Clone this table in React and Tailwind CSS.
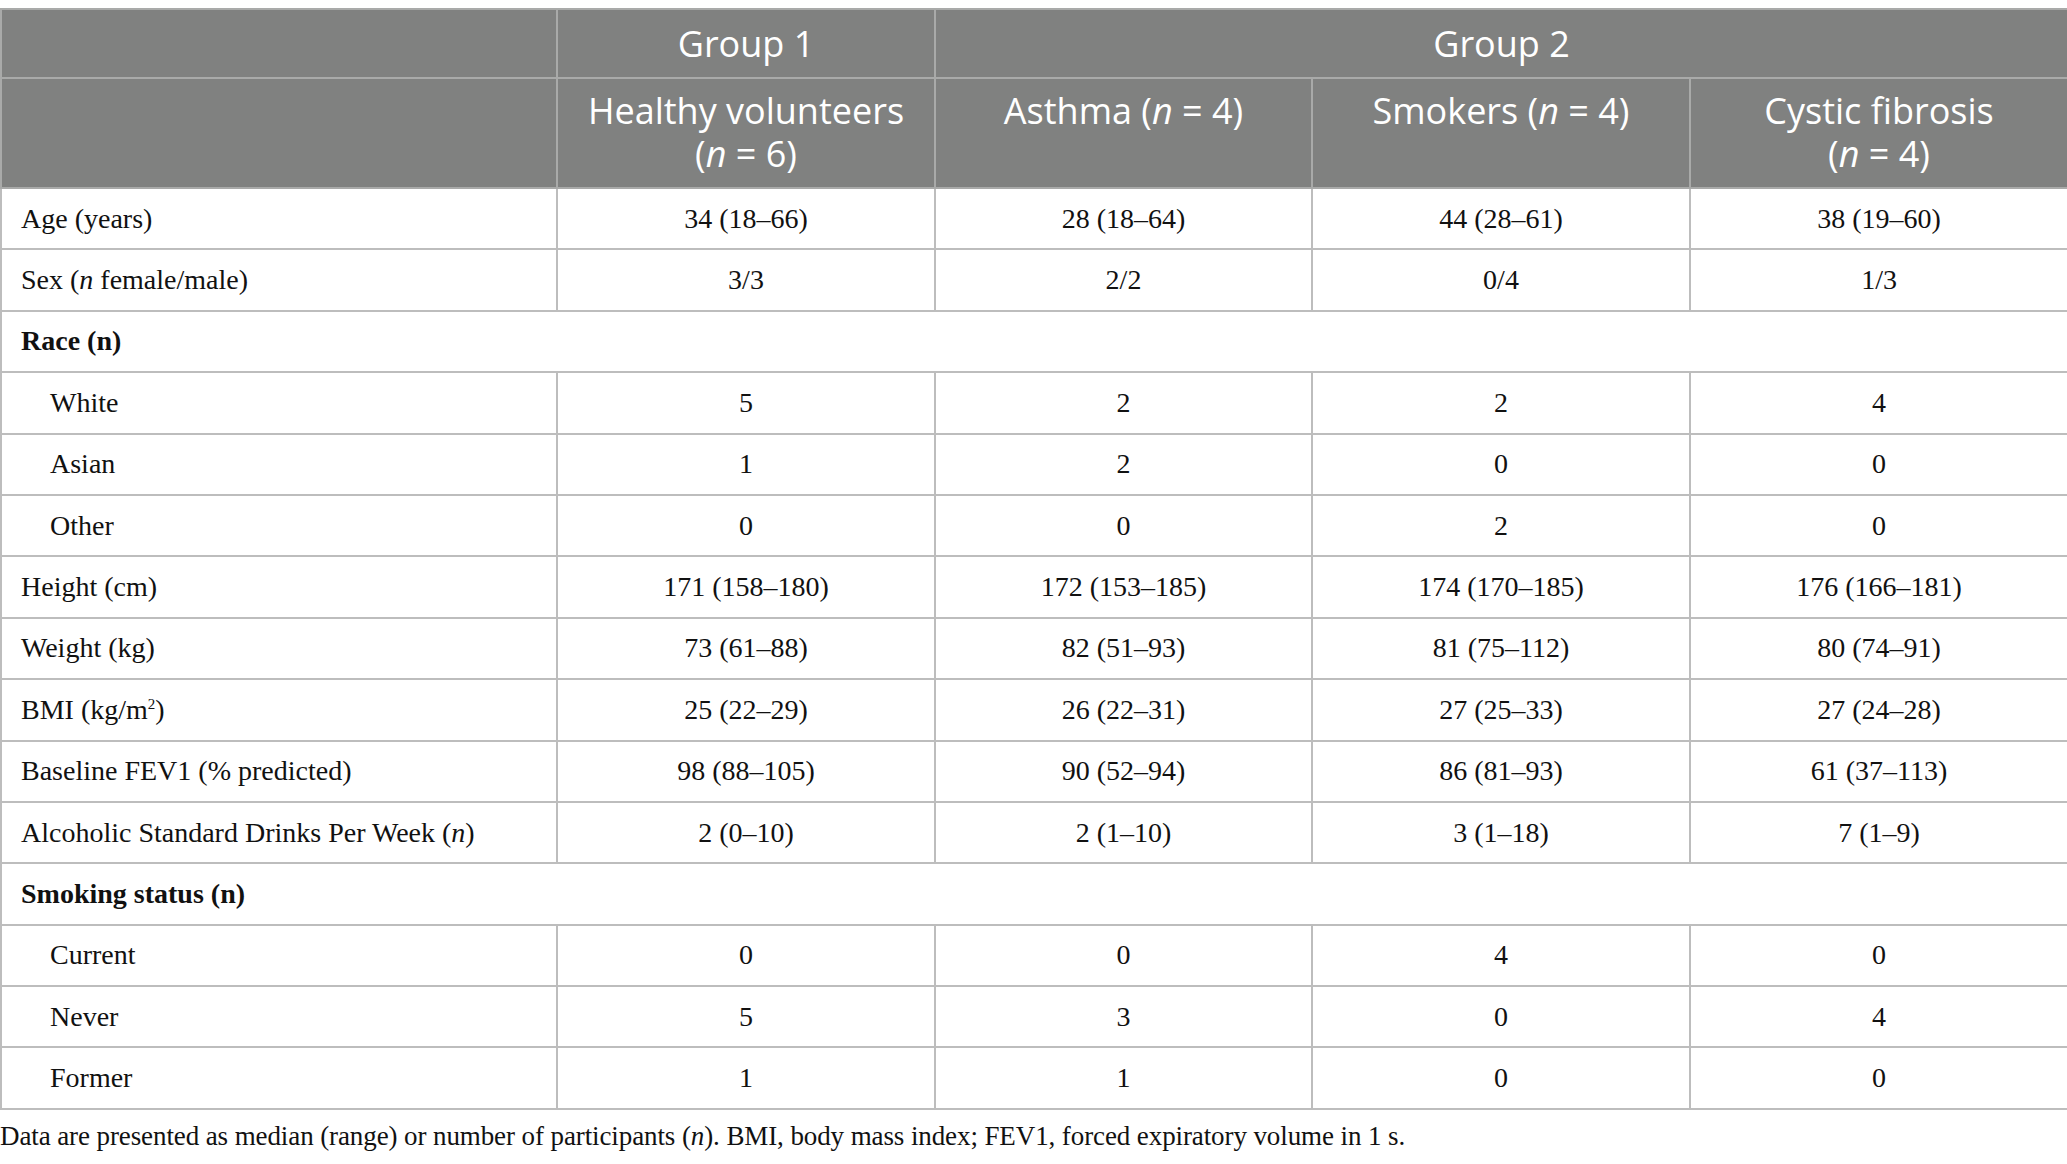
import React from "react";

const serif = { fontFamily: '"Liberation Serif", "Times New Roman", serif' };

const rows = [
  { label: "Age (years)", v: ["34 (18–66)", "28 (18–64)", "44 (28–61)", "38 (19–60)"] },
  { label: <>Sex (<i>n</i> female/male)</>, v: ["3/3", "2/2", "0/4", "1/3"] },
  { section: "Race (n)" },
  { label: "White", indent: true, v: ["5", "2", "2", "4"] },
  { label: "Asian", indent: true, v: ["1", "2", "0", "0"] },
  { label: "Other", indent: true, v: ["0", "0", "2", "0"] },
  { label: "Height (cm)", v: ["171 (158–180)", "172 (153–185)", "174 (170–185)", "176 (166–181)"] },
  { label: "Weight (kg)", v: ["73 (61–88)", "82 (51–93)", "81 (75–112)", "80 (74–91)"] },
  { label: <>BMI (kg/m<span className="text-[15px] align-[10px]">2</span>)</>, v: ["25 (22–29)", "26 (22–31)", "27 (25–33)", "27 (24–28)"] },
  { label: "Baseline FEV1 (% predicted)", v: ["98 (88–105)", "90 (52–94)", "86 (81–93)", "61 (37–113)"] },
  { label: <>Alcoholic Standard Drinks Per Week (<i>n</i>)</>, v: ["2 (0–10)", "2 (1–10)", "3 (1–18)", "7 (1–9)"] },
  { section: "Smoking status (n)" },
  { label: "Current", indent: true, v: ["0", "0", "4", "0"] },
  { label: "Never", indent: true, v: ["5", "3", "0", "4"] },
  { label: "Former", indent: true, v: ["1", "1", "0", "0"] },
];

export default function App() {
  return (
    <div className="w-[2067px] bg-white pt-[8px]">
      <table className="w-[2067px] table-fixed border-collapse">
        <colgroup>
          <col className="w-[556px]" />
          <col className="w-[378px]" />
          <col className="w-[377px]" />
          <col className="w-[378px]" />
          <col className="w-[378px]" />
        </colgroup>
        <thead
          className="bg-[#808180] text-white text-[36px] leading-[43px]"
          style={{ fontFamily: '"Open Sans", "Noto Sans", sans-serif' }}
        >
          <tr className="h-[69px]">
            <th className="border-2 border-[#a9aaa9] font-normal"></th>
            <th className="border-2 border-[#a9aaa9] font-normal">Group 1</th>
            <th colSpan={3} className="border-2 border-[#a9aaa9] font-normal">Group 2</th>
          </tr>
          <tr className="h-[110px]">
            <th className="border-2 border-[#a9aaa9] font-normal"></th>
            <th className="border-2 border-[#a9aaa9] font-normal align-top pt-[10px]">
              Healthy volunteers<br />(<i>n</i> = 6)
            </th>
            <th className="border-2 border-[#a9aaa9] font-normal align-top pt-[10px]">
              Asthma (<i>n</i> = 4)
            </th>
            <th className="border-2 border-[#a9aaa9] font-normal align-top pt-[10px]">
              Smokers (<i>n</i> = 4)
            </th>
            <th className="border-2 border-[#a9aaa9] font-normal align-top pt-[10px]">
              Cystic fibrosis<br />(<i>n</i> = 4)
            </th>
          </tr>
        </thead>
        <tbody className="text-[28px] text-[#111]" style={serif}>
          {rows.map((r, i) =>
            r.section ? (
              <tr key={i} className="h-[61.4px]">
                <td colSpan={5} className="border-2 border-[#bdbdbd] pl-[19px] font-bold">
                  {r.section}
                </td>
              </tr>
            ) : (
              <tr key={i} className="h-[61.4px]">
                <td
                  className={
                    r.indent
                      ? "border-2 border-[#bdbdbd] pl-[48px]"
                      : "border-2 border-[#bdbdbd] pl-[19px]"
                  }
                >
                  {r.label}
                </td>
                {r.v.map((x, j) => (
                  <td key={j} className="border-2 border-[#bdbdbd] text-center">
                    {x}
                  </td>
                ))}
              </tr>
            )
          )}
        </tbody>
      </table>
      <p className="mt-[10px] text-[27px] tracking-[-0.1px] text-[#111] leading-[32px]" style={serif}>
        Data are presented as median (range) or number of participants (<i>n</i>). BMI, body mass index; FEV1, forced expiratory volume in 1 s.
      </p>
    </div>
  );
}
